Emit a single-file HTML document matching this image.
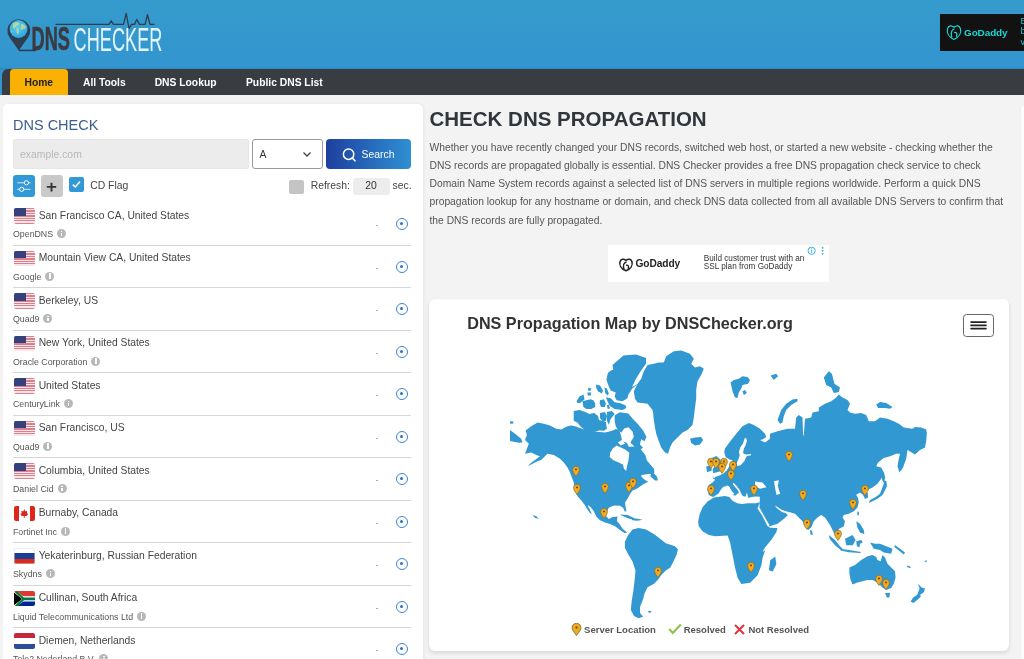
<!DOCTYPE html>
<html><head><meta charset="utf-8">
<style>
*{box-sizing:border-box;margin:0;padding:0}
html,body{width:1024px;height:659px;overflow:hidden}
body{will-change:transform;background:#f3f3f3;font-family:"Liberation Sans",sans-serif;position:relative;color:#333}
.abs{position:absolute}
#hdr{left:0;top:0;width:1024px;height:95px;background:linear-gradient(#359bcc,#3395cf 68px,#2c80b5 69px,#3395cf 70px)}
#nav{left:2px;top:69px;width:1030px;height:26px;background:#393d42;border-radius:6px 0 0 0}
#nav span{position:absolute;top:0;height:26px;line-height:28px;font-size:10.3px;font-weight:bold;color:#fff;white-space:nowrap}
#home{left:8px;width:57.6px;background:#fbb101;border-radius:4px 4px 0 0;color:#222!important;text-align:center}
#lcard{left:3px;top:104px;width:420px;height:600px;background:#fff;border-radius:5px;box-shadow:1px 0 3px rgba(0,0,0,.06)}
.t{position:absolute;white-space:nowrap;line-height:1}
#mcard{left:429px;top:299px;width:580px;height:352px;background:#fff;border-radius:6px;box-shadow:0 2px 4px rgba(0,0,0,.12)}
.row{position:absolute;left:13px;width:398px;height:43.1px;border-bottom:1.3px solid #d6d6d6}
.flag{position:absolute;left:0.7px;width:21.1px;height:15.8px;border-radius:2px;overflow:hidden}
.loc{position:absolute;left:25.7px;font-size:10.3px;color:#444;white-space:nowrap;line-height:1}
.prov{position:absolute;left:0;font-size:8.8px;color:#555;white-space:nowrap;line-height:1}
.info{display:inline-block;width:9px;height:9px;border-radius:50%;background:#bdbdbd;vertical-align:-1px;margin-left:4px;position:relative}
.info{background:#b8b8b8}.info:after{content:"";position:absolute;left:3.8px;top:3.6px;width:1.4px;height:3.6px;background:#fff}.info:before{content:"";position:absolute;left:3.8px;top:1.6px;width:1.4px;height:1.3px;background:#fff}
.dash{position:absolute;left:363px;width:2px;height:1px;background:#aaa}
.tgt{position:absolute;left:382.5px;width:12px;height:12px;border-radius:50%;border:1.3px solid #3a86dd}
.tgt:after{content:"";position:absolute;left:3.2px;top:3.2px;width:3.2px;height:3.2px;border-radius:50%;background:#2f6fc0}
.us{background:repeating-linear-gradient(#d9808c 0 1.215px,#f9e6ea 1.215px 2.43px)}
.us:before{content:"";position:absolute;left:0;top:0;width:12.3px;height:7.8px;background:#34417c}
.ca{background:linear-gradient(90deg,#e0261b 0 4.9px,#fff 4.9px 16.2px,#e0261b 16.2px)}
.ca:after{content:"";position:absolute;left:6.4px;top:3.2px;width:8.4px;height:9px;background:#d8241a;clip-path:polygon(50% 0,62% 30%,85% 20%,80% 55%,100% 50%,80% 80%,55% 80%,55% 100%,45% 100%,45% 80%,20% 80%,0 50%,20% 55%,15% 20%,38% 30%)}
.ru{background:linear-gradient(#fff 0 5.27px,#1c3f94 5.27px 10.53px,#d52b1e 10.53px)}
.ru{box-shadow:inset 0 0 0 0.5px #ddd}
.nl{background:linear-gradient(#c4283a 0 5.27px,#fff 5.27px 10.53px,#2c4c98 10.53px)}
.za{background:#fff}
</style></head>
<body>
<div id="hdr" class="abs"></div>
<svg class="abs" style="left:0;top:0" width="170" height="62" viewBox="0 0 170 62">
<defs><radialGradient id="gl" cx="0.45" cy="0.4" r="0.6"><stop offset="0" stop-color="#5fd0f5"/><stop offset="1" stop-color="#2ea6dc"/></radialGradient></defs>
<path d="M18.8 50.6 L9.6 37.5 A11.4 11.4 0 1 1 28 37.5 Z" fill="#2e3d4f"/>
<circle cx="18.6" cy="29" r="9" fill="url(#gl)"/>
<path d="M13 23.5 q3 -2 6 -1 q1 2 -1 3 q-2 0 -3 2 q-1 2 -2 0 z M16.5 28 q2 0 2.5 2 q0 3 -1.5 4.5 q-1.5 -2 -1 -6.5z M21 24 q3 0 4.5 2 q1 2 -0.5 3 q-2 -1 -3 1 q-2 -1 -1 -3z M12 30 q1 2 0 3 q-1.5 -1 0 -3z" fill="#c9d98a" opacity="0.85"/>
<path d="M18.8 50.4 H36" stroke="#2e3d4f" stroke-width="1.6"/>
<path d="M55.5 24.4 H109 L111.2 20.8 L113.5 24.4 H123.5 L126.2 13.3 L129 28.5 L131.5 24.4 H134.5 L136.8 19.5 L139.5 24.4 H145 L147.5 14.6 L150 24.4 H154.5" fill="none" stroke="#2e3d4f" stroke-width="1.3" stroke-linejoin="round"/>
<text x="0" y="0" transform="translate(31.6 50.4) scale(0.535 1)" font-family="Liberation Sans" font-weight="bold" font-size="34" fill="#3a3a40" stroke="#3a3a40" stroke-width="0.6">DNS</text>
<text x="0" y="0" transform="translate(73.6 50.7) scale(0.534 1)" font-family="Liberation Sans" font-size="34" fill="#e3f5ff">CHECKER</text>
</svg>
<div class="abs" style="left:940px;top:14.2px;width:90px;height:37px;background:#121212"></div>
<svg class="abs" style="left:945px;top:23px" width="18" height="18" viewBox="0 0 18 18"><path d="M9 16.5 C3.5 14 1.5 9.5 2.6 5.6 C3.5 2.4 6.4 2 9 4.2 C11.6 2 14.5 2.4 15.4 5.6 C16.5 9.5 14.5 14 9 16.5 Z" fill="none" stroke="#1bd8d5" stroke-width="1.2"/><path d="M6.8 14.5 C5.5 10 6.5 6.5 9.5 5.8 M9 9.5 C11.5 9 12.5 10 11.5 14" fill="none" stroke="#1bd8d5" stroke-width="1.2"/></svg>
<div class="t" style="left:964px;top:27.6px;font-size:9.9px;font-weight:bold;color:#1bd8d5;letter-spacing:-0.05px">GoDaddy</div>
<div class="t" style="left:1020.4px;top:15.5px;font-size:9px;color:#1bc8cf;line-height:10.5px;white-space:normal;width:10px">B<br>b<br>v</div>
<div id="nav" class="abs">
  <span id="home">Home</span>
  <span style="left:81px">All Tools</span>
  <span style="left:152.7px">DNS Lookup</span>
  <span style="left:244px">Public DNS List</span>
</div>
<div id="lcard" class="abs"></div>
<div class="abs" style="left:1021.3px;top:103.7px;width:20px;height:600px;background:#fbfbfb;border-radius:5px;box-shadow:0 0 3px rgba(0,0,0,.05)"></div>

<div class="t" style="left:13px;top:117.6px;font-size:14.5px;color:#3d5e90">DNS CHECK</div>
<div class="abs" style="left:13px;top:139px;width:235.5px;height:29.5px;background:#ececec;border-radius:3px;box-shadow:inset 0 0 0 1px #e6e6e6"></div>
<div class="t" style="left:20px;top:149.5px;font-size:10.4px;color:#b8b8b8">example.com</div>
<div class="abs" style="left:252.3px;top:139px;width:70.3px;height:29.5px;background:#fff;border:1px solid #9a9a9a;border-radius:3px"></div>
<div class="t" style="left:259.5px;top:149.5px;font-size:10.4px;color:#333">A</div>
<svg class="abs" style="left:302px;top:151px" width="10" height="7" viewBox="0 0 10 7"><path d="M1.5 1.5 L5 5 L8.5 1.5" fill="none" stroke="#444" stroke-width="1.3"/></svg>
<div class="abs" style="left:326px;top:139px;width:85px;height:30px;border-radius:4px;background:linear-gradient(90deg,#1d3f9e,#2a7cc8 75%,#3090d0)"></div>
<svg class="abs" style="left:342px;top:146.5px" width="15" height="16" viewBox="0 0 15 16"><circle cx="6.6" cy="7.2" r="5.2" fill="none" stroke="#fff" stroke-width="1.5"/><path d="M10.3 11 L13 13.8" stroke="#fff" stroke-width="1.6" stroke-linecap="round"/></svg>
<div class="t" style="left:361.5px;top:149.5px;font-size:10.4px;color:#fff">Search</div>
<div class="abs" style="left:13.3px;top:175px;width:21.6px;height:21.6px;background:#3399d6;border-radius:3px"></div>
<svg class="abs" style="left:13.3px;top:175px" width="22" height="22" viewBox="0 0 22 22"><path d="M4.3 7.8 H17.5 M4.3 14.3 H17.5" stroke="#e8f6ff" stroke-width="0.9"/><circle cx="13.4" cy="7.8" r="2.1" fill="#2f8fd0" stroke="#fff" stroke-width="1"/><circle cx="8.7" cy="14.3" r="2.1" fill="#2f9ad6" stroke="#fff" stroke-width="1"/></svg>
<div class="abs" style="left:41.4px;top:175px;width:21.4px;height:21.6px;background:#c9c9c9;border-radius:3px"></div>
<svg class="abs" style="left:41.4px;top:175px" width="22" height="22" viewBox="0 0 22 22"><path d="M10.5 7.8 V16.6 M5.8 11.9 H15.2" stroke="#333" stroke-width="1.9"/></svg>
<div class="abs" style="left:69px;top:177.2px;width:14.8px;height:14.6px;background:#3399d6;border-radius:2px"></div>
<svg class="abs" style="left:69px;top:177.2px" width="15" height="15" viewBox="0 0 15 15"><path d="M3.8 7.6 L6.3 10 L11 4.6" fill="none" stroke="#fff" stroke-width="1.5"/></svg>
<div class="t" style="left:90.2px;top:180.5px;font-size:10.4px;color:#444">CD Flag</div>
<div class="abs" style="left:289.2px;top:179.7px;width:14.4px;height:14px;background:#c4c4c4;border-radius:2px"></div>
<div class="t" style="left:310.7px;top:181px;font-size:10.4px;color:#444">Refresh:</div>
<div class="abs" style="left:352.5px;top:177.5px;width:37.3px;height:17.2px;background:#ededed;border-radius:3px"></div>
<div class="t" style="left:365.2px;top:181px;font-size:10.4px;color:#333">20</div>
<div class="t" style="left:392.6px;top:181px;font-size:10.4px;color:#444">sec.</div>
<div class="row" style="top:202.8px"><div class="flag us" style="top:5.4px"></div><div class="loc" style="top:8.2px">San Francisco CA, United States</div><div class="prov" style="top:26.5px">OpenDNS<i class="info"></i></div><div class="dash" style="top:22.5px"></div><div class="tgt" style="top:15.3px"></div></div>
<div class="row" style="top:245.3px"><div class="flag us" style="top:5.4px"></div><div class="loc" style="top:8.2px">Mountain View CA, United States</div><div class="prov" style="top:26.5px">Google<i class="info"></i></div><div class="dash" style="top:22.5px"></div><div class="tgt" style="top:15.3px"></div></div>
<div class="row" style="top:287.8px"><div class="flag us" style="top:5.4px"></div><div class="loc" style="top:8.2px">Berkeley, US</div><div class="prov" style="top:26.5px">Quad9<i class="info"></i></div><div class="dash" style="top:22.5px"></div><div class="tgt" style="top:15.3px"></div></div>
<div class="row" style="top:330.3px"><div class="flag us" style="top:5.4px"></div><div class="loc" style="top:8.2px">New York, United States</div><div class="prov" style="top:26.5px">Oracle Corporation<i class="info"></i></div><div class="dash" style="top:22.5px"></div><div class="tgt" style="top:15.3px"></div></div>
<div class="row" style="top:372.8px"><div class="flag us" style="top:5.4px"></div><div class="loc" style="top:8.2px">United States</div><div class="prov" style="top:26.5px">CenturyLink<i class="info"></i></div><div class="dash" style="top:22.5px"></div><div class="tgt" style="top:15.3px"></div></div>
<div class="row" style="top:415.3px"><div class="flag us" style="top:5.4px"></div><div class="loc" style="top:8.2px">San Francisco, US</div><div class="prov" style="top:26.5px">Quad9<i class="info"></i></div><div class="dash" style="top:22.5px"></div><div class="tgt" style="top:15.3px"></div></div>
<div class="row" style="top:457.8px"><div class="flag us" style="top:5.4px"></div><div class="loc" style="top:8.2px">Columbia, United States</div><div class="prov" style="top:26.5px">Daniel Cid<i class="info"></i></div><div class="dash" style="top:22.5px"></div><div class="tgt" style="top:15.3px"></div></div>
<div class="row" style="top:500.3px"><div class="flag ca" style="top:5.4px"></div><div class="loc" style="top:8.2px">Burnaby, Canada</div><div class="prov" style="top:26.5px">Fortinet Inc<i class="info"></i></div><div class="dash" style="top:22.5px"></div><div class="tgt" style="top:15.3px"></div></div>
<div class="row" style="top:542.8px"><div class="flag ru" style="top:5.4px"></div><div class="loc" style="top:8.2px">Yekaterinburg, Russian Federation</div><div class="prov" style="top:26.5px">Skydns<i class="info"></i></div><div class="dash" style="top:22.5px"></div><div class="tgt" style="top:15.3px"></div></div>
<div class="row" style="top:585.3px"><div class="flag za" style="top:5.4px"><svg width="21.1" height="15.8" viewBox="0 0 22 16" preserveAspectRatio="none" style="display:block"><rect width="22" height="16" fill="#fff"/><path d="M0 0 H22 V5.3 H9 Z" fill="#de3831"/><path d="M0 16 H22 V10.7 H9 Z" fill="#002395"/><path d="M0 1.5 L8.5 8 L0 14.5 Z" fill="#000"/><path d="M0 0 L0 1.5 L8.5 8 L0 14.5 L0 16 L10 9.3 H22 V6.7 H10 Z" fill="none"/><path d="M0 0.5 L9.2 8 L0 15.5" fill="none" stroke="#ffb612" stroke-width="1"/><path d="M1 0 L10.3 6.5 H22 V9.5 H10.3 L1 16" fill="none" stroke="#fff" stroke-width="1.2"/><path d="M10.2 8 H22" stroke="#007a4d" stroke-width="2.6"/><path d="M0.8 -0.5 L10.2 8 L0.8 16.5" fill="none" stroke="#007a4d" stroke-width="2.2"/><path d="M0 2.2 L7.3 8 L0 13.8 Z" fill="#000"/></svg></div><div class="loc" style="top:8.2px">Cullinan, South Africa</div><div class="prov" style="top:26.5px">Liquid Telecommunications Ltd<i class="info"></i></div><div class="dash" style="top:22.5px"></div><div class="tgt" style="top:15.3px"></div></div>
<div class="row" style="top:627.8px"><div class="flag nl" style="top:5.4px"></div><div class="loc" style="top:8.2px">Diemen, Netherlands</div><div class="prov" style="top:26.5px">Tele2 Nederland B.V.<i class="info"></i></div><div class="dash" style="top:22.5px"></div><div class="tgt" style="top:15.3px"></div></div>
<div class="t" style="left:429.5px;top:108.5px;font-size:20.5px;font-weight:bold;color:#30363c">CHECK DNS PROPAGATION</div>
<div class="abs" style="left:429.5px;top:138.5px;width:590px;font-size:10.3px;line-height:18.3px;color:#555">
<div style="white-space:nowrap">Whether you have recently changed your DNS records, switched web host, or started a new website - checking whether the</div>
<div style="white-space:nowrap">DNS records are propagated globally is essential. DNS Checker provides a free DNS propagation check service to check</div>
<div style="white-space:nowrap">Domain Name System records against a selected list of DNS servers in multiple regions worldwide. Perform a quick DNS</div>
<div style="white-space:nowrap">propagation lookup for any hostname or domain, and check DNS data collected from all available DNS Servers to confirm that</div>
<div style="white-space:nowrap">the DNS records are fully propagated.</div>
</div>
<div class="abs" style="left:608px;top:245px;width:220.5px;height:36.5px;background:#fff"></div>
<svg class="abs" style="left:618px;top:256.5px" width="16" height="15" viewBox="0 0 16 15"><path d="M8 13.8 C3 11.8 1.2 8 2 4.8 C2.8 1.8 5.6 1.4 8 3.4 C10.4 1.4 13.2 1.8 14 4.8 C14.8 8 13 11.8 8 13.8 Z" fill="none" stroke="#222" stroke-width="1.5"/><path d="M6 12 C4.8 8.5 5.6 5.5 8.5 5 M8 8.2 C10.3 7.8 11 9 10.2 12" fill="none" stroke="#222" stroke-width="1.4"/></svg>
<div class="t" style="left:635.5px;top:259.3px;font-size:10.2px;font-weight:bold;color:#222;letter-spacing:-0.1px">GoDaddy</div>
<div class="t" style="left:703.8px;top:254.5px;font-size:8.2px;line-height:8.8px;color:#333">Build customer trust with an<br>SSL plan from GoDaddy</div>
<svg class="abs" style="left:805px;top:244.5px" width="22" height="12" viewBox="0 0 22 12"><circle cx="6.6" cy="5.8" r="3.6" fill="none" stroke="#25a9d9" stroke-width="0.9"/><path d="M6.6 4.6 V7.8 M6.6 3.3 V3.9" stroke="#25a9d9" stroke-width="0.9"/><circle cx="17.6" cy="2.8" r="0.9" fill="#25a9d9"/><circle cx="17.6" cy="5.8" r="0.9" fill="#25a9d9"/><circle cx="17.6" cy="8.8" r="0.9" fill="#25a9d9"/></svg>
<div id="mcard" class="abs"></div>
<div class="t" style="left:467.2px;top:315.3px;font-size:16.2px;font-weight:bold;color:#333">DNS Propagation Map by DNSChecker.org</div>
<div class="abs" style="left:963.2px;top:314.2px;width:30.4px;height:23.3px;border:1.2px solid #666;border-radius:3.5px;background:#fff"></div>
<svg class="abs" style="left:963.2px;top:314.2px" width="31" height="24" viewBox="0 0 31 24"><path d="M8 8.1 H23 M8 11.4 H23 M8 14.6 H23" stroke="#222" stroke-width="1.6" stroke-linecap="round"/></svg>
<div id="map"><svg class="abs" style="left:0;top:0" width="1024" height="659" viewBox="0 0 1024 659"><path d="M525.6 430.6 L531.2 426.2 L537.5 422.5 L543.8 423.8 L550.0 425.6 L556.2 428.8 L561.2 429.4 L567.5 426.2 L571.2 425.6 L575.0 426.2 L580.0 428.1 L590.0 431.6 L597.4 431.8 L604.9 432.4 L611.3 431.0 L616.0 428.9 L619.2 430.0 L620.8 434.8 L621.9 440.1 L626.7 442.4 L628.8 446.7 L634.6 446.4 L641.0 449.6 L645.3 454.9 L646.9 460.5 L651.0 465.3 L654.1 469.0 L654.4 472.8 L651.7 473.8 L648.3 474.1 L643.5 474.8 L640.8 475.5 L642.8 478.2 L645.5 480.3 L648.3 481.7 L645.5 483.0 L642.1 485.1 L637.3 488.5 L632.6 490.5 L630.5 493.3 L627.5 498.8 L627.5 498.8 L625.0 502.5 L625.6 506.9 L626.5 511.2 L624.8 511.5 L623.1 507.8 L620.0 505.8 L613.8 505.6 L608.8 507.8 L606.5 512.5 L606.2 516.2 L608.8 519.0 L612.5 517.0 L617.5 516.5 L616.9 521.2 L619.4 523.8 L622.5 528.8 L626.5 531.9 L628.1 530.6 L626.2 533.1 L624.4 533.1 L620.0 530.0 L615.0 526.2 L610.0 524.0 L605.0 522.5 L600.0 520.2 L596.2 516.5 L593.8 511.2 L590.6 506.9 L587.5 505.0 L591.9 514.0 L590.0 513.1 L586.9 508.8 L584.4 504.4 L581.2 500.2 L577.5 496.2 L575.0 491.2 L573.8 486.2 L574.4 480.0 L575.0 492.0 L573.8 482.5 L571.9 477.5 L570.0 472.5 L567.5 467.5 L563.8 462.5 L560.0 458.8 L553.8 455.0 L547.5 453.8 L541.2 460.0 L537.5 461.2 L532.5 463.8 L528.1 466.2 L530.0 463.8 L535.0 460.0 L540.0 456.2 L536.2 455.0 L531.2 452.5 L525.0 453.8 L526.9 448.8 L528.8 443.8 L525.0 440.0 L526.9 435.0Z M510.0 430.0 L515.0 433.8 L521.2 438.8 L522.5 442.5 L518.8 442.8 L510.0 441.0Z M510.0 421.2 L513.1 421.5 L513.5 423.5 L510.2 423.8Z M651.0 474.1 L653.7 473.1 L657.2 476.9 L657.8 480.4 L655.1 480.4 L652.4 478.2 L650.3 476.2Z M620.0 514.4 L627.5 515.0 L632.5 517.2 L635.2 518.8 L630.0 519.0 L623.8 516.5Z M631.2 519.0 L636.2 518.5 L642.5 519.8 L637.5 520.8 L632.5 520.2Z M633.8 391.2 L637.5 383.8 L641.2 378.8 L643.8 371.2 L647.5 365.0 L653.8 363.8 L658.8 362.5 L663.8 362.5 L666.2 356.2 L673.8 351.2 L681.2 350.6 L690.0 353.8 L693.8 358.8 L691.2 363.8 L695.0 367.5 L700.0 366.2 L703.8 368.8 L701.2 375.0 L697.5 381.2 L696.2 390.0 L696.2 398.8 L695.0 407.5 L693.8 417.5 L692.5 425.0 L687.5 430.0 L682.5 432.5 L677.5 437.5 L672.5 442.5 L670.0 447.5 L668.1 453.8 L665.0 452.5 L661.2 447.5 L658.8 441.2 L656.2 433.8 L655.0 427.5 L653.8 420.0 L653.1 412.5 L655.0 422.0 L652.5 410.0 L647.5 403.8 L637.5 402.5 L635.0 398.8Z M690.0 438.8 L695.0 437.5 L701.2 436.9 L703.1 440.0 L700.0 444.4 L695.0 445.6 L691.2 443.1Z M612.5 365.0 L623.4 355.6 L635.9 354.4 L646.1 358.0 L646.1 363.4 L640.6 371.2 L635.9 379.1 L632.0 386.9 L638.1 383.7 L632.3 388.6 L628.4 394.4 L627.4 398.3 L622.5 401.2 L616.6 400.3 L614.7 396.4 L615.7 392.5 L610.8 390.5 L608.8 386.6 L606.4 379.8 L607.9 372.9 L610.9 370.5 L613.3 369.7Z M605.9 397.3 L610.8 398.3 L614.7 402.2 L620.5 403.2 L625.4 405.2 L626.4 408.1 L622.5 410.0 L614.7 409.1 L609.8 406.1 L607.9 402.2Z M600.0 400.3 L603.9 399.3 L605.9 403.2 L604.9 407.1 L601.0 407.1 L599.6 403.2Z M606.9 405.2 L608.8 404.7 L610.0 408.6 L607.7 409.1Z M596.1 384.6 L600.0 385.6 L603.0 390.5 L602.0 393.4 L598.1 391.5 L596.1 387.6Z M604.4 387.6 L606.9 388.6 L608.8 393.4 L607.9 395.4 L605.4 393.4Z M588.3 387.6 L591.2 388.6 L590.3 391.0 L588.1 390.5Z M587.3 392.5 L591.2 392.5 L590.8 395.4 L587.8 395.4Z M576.6 401.2 L579.5 396.4 L583.4 394.4 L584.4 398.3 L580.5 402.2 L577.6 403.2Z M582.5 401.2 L586.4 400.3 L590.3 399.3 L593.2 400.3 L595.2 403.2 L595.2 407.1 L591.2 409.1 L586.4 409.1 L583.4 407.1Z M573.7 411.0 L579.5 410.0 L585.4 412.0 L589.3 413.9 L594.2 413.0 L598.1 415.9 L599.1 420.8 L601.0 426.6 L599.1 430.5 L592.2 432.5 L585.4 430.5 L580.5 426.6 L577.6 422.7 L573.7 420.8Z M574.6 421.0 L585.4 420.0 L599.1 420.0 L605.9 422.0 L606.9 428.8 L603.9 430.7 L599.1 430.3 L593.2 430.9 L589.3 430.7 L584.4 426.8 L579.5 423.9Z M600.0 413.0 L604.9 412.0 L606.9 415.9 L605.9 420.8 L603.0 421.8 L600.0 417.9Z M606.9 412.0 L611.8 411.0 L614.7 413.9 L610.8 418.8 L608.8 424.7 L606.9 420.8Z M576.6 400.9 L579.7 396.2 L583.6 394.7 L584.4 399.4 L579.7 403.3Z M624.9 541.7 L627.9 535.6 L632.5 529.5 L638.5 528.0 L646.1 529.5 L653.7 534.1 L659.8 538.6 L665.8 543.2 L674.9 546.2 L678.0 549.3 L676.4 555.3 L673.4 561.4 L670.4 567.5 L665.8 570.5 L661.3 575.0 L658.2 579.6 L653.7 584.1 L647.6 587.2 L644.6 593.2 L643.1 599.3 L640.0 606.9 L640.0 613.0 L643.1 616.8 L638.5 618.3 L634.0 616.0 L630.9 609.9 L631.7 600.8 L633.2 591.7 L634.7 579.6 L635.5 570.5 L632.5 561.4 L627.9 553.8 L624.9 547.7Z M647.6 611.4 L649.9 610.7 L651.7 611.7 L649.4 613.0Z M708.8 495.0 L707.5 490.0 L708.8 485.0 L712.5 482.5 L715.0 480.0 L712.5 476.2 L711.2 472.5 L713.3 479.1 L715.6 476.7 L719.5 475.5 L723.4 473.6 L726.6 470.5 L728.9 467.0 L730.1 463.4 L732.8 460.5 L729.7 459.5 L725.8 457.3 L724.2 452.5 L725.0 448.6 L727.7 444.7 L731.2 440.0 L736.2 433.8 L742.5 426.2 L748.8 423.1 L753.8 425.0 L760.0 428.8 L765.0 433.8 L766.2 436.9 L762.5 439.4 L760.0 440.0 L765.0 442.5 L770.0 438.8 L770.0 433.8 L777.5 431.2 L787.5 428.8 L795.0 428.8 L796.2 417.5 L798.8 415.0 L802.5 417.5 L803.1 435.0 L804.4 436.2 L803.8 435.0 L805.0 418.8 L811.2 417.5 L812.5 412.5 L818.8 411.2 L818.8 407.5 L825.0 403.8 L831.2 401.2 L836.2 397.5 L838.8 394.4 L842.5 397.5 L847.5 400.0 L850.0 403.8 L847.5 410.0 L850.0 412.5 L855.0 413.8 L861.2 413.1 L866.2 415.0 L868.8 421.2 L875.0 421.2 L880.0 417.5 L887.5 418.8 L893.8 421.2 L898.8 423.8 L903.8 427.5 L912.5 428.8 L915.0 426.9 L921.2 427.5 L926.2 429.4 L925.0 426.2 L926.9 432.5 L926.2 441.2 L925.0 447.5 L920.0 450.0 L915.0 454.4 L907.5 450.0 L906.2 458.8 L903.1 467.5 L899.4 472.5 L897.5 466.2 L898.8 458.8 L900.0 453.8 L896.2 453.8 L890.0 456.2 L883.8 458.1 L878.1 462.5 L876.2 466.2 L881.2 467.5 L883.1 472.5 L881.2 478.8 L877.5 483.8 L872.5 487.5 L867.5 490.0 L863.8 490.2 L867.8 493.1 L868.1 497.5 L865.0 499.0 L863.1 495.0 L860.0 492.5 L856.2 494.8 L858.1 498.1 L858.8 502.5 L857.5 507.0 L857.5 507.5 L853.8 511.2 L848.8 513.8 L843.8 515.0 L842.5 517.5 L845.0 521.2 L843.8 526.2 L838.8 529.0 L837.5 538.8 L835.0 535.0 L832.5 530.0 L830.0 525.0 L827.5 521.2 L825.0 517.5 L821.2 515.0 L817.5 517.5 L813.8 521.2 L811.2 527.5 L808.1 530.0 L805.0 526.2 L802.5 521.2 L797.5 516.2 L795.0 513.8 L790.0 512.2 L785.0 511.0 L781.2 509.4 L777.5 506.9 L775.0 505.6 L776.2 507.5 L779.8 510.6 L782.5 512.2 L785.6 513.1 L787.8 515.2 L782.5 520.0 L777.5 523.8 L769.0 526.5 L769.4 525.0 L764.4 516.5 L759.4 507.5 L759.8 500.6 L759.8 496.8 L755.9 496.4 L751.2 496.9 L749.7 497.7 L748.1 497.5 L747.0 492.5 L745.4 496.8 L742.8 496.1 L741.1 493.2 L739.5 489.7 L736.0 485.2 L733.4 482.8 L732.7 484.1 L738.0 490.5 L739.1 493.2 L737.6 493.6 L735.8 495.3 L734.1 493.6 L731.9 491.3 L729.4 486.8 L727.8 485.5 L723.1 487.0 L720.9 489.6 L718.6 493.6 L713.1 496.9 L710.6 496.1 L708.3 494.4Z M711.7 458.0 L716.4 456.0 L720.3 459.5 L722.3 465.8 L720.3 471.2 L713.3 473.2 L712.5 469.7 L714.8 465.8Z M706.2 466.6 L710.9 465.4 L711.9 470.5 L707.0 472.2Z M730.6 382.5 L733.8 380.0 L738.8 378.8 L742.5 376.2 L747.5 376.9 L750.0 380.0 L748.1 383.8 L742.5 385.0 L741.2 388.8 L738.8 392.5 L737.5 398.1 L735.0 397.5 L732.5 391.2Z M742.5 391.2 L745.0 390.0 L746.9 393.1 L743.8 395.0Z M770.6 375.6 L776.2 373.8 L778.1 376.2 L773.8 380.0Z M777.5 420.0 L781.2 410.0 L786.2 403.8 L792.5 399.4 L797.5 398.8 L797.5 401.2 L791.2 405.0 L786.2 410.0 L783.8 416.2 L782.5 422.5 L780.0 423.8Z M823.8 377.5 L828.8 371.2 L831.9 373.8 L834.4 383.8 L840.0 387.5 L838.8 391.9 L833.8 393.1 L831.2 387.5 L826.2 385.0Z M876.2 404.4 L880.0 401.9 L886.2 403.1 L892.5 406.9 L890.0 408.8 L885.0 408.1 L878.1 408.1Z M881.2 467.5 L884.0 472.5 L885.2 477.5 L883.8 482.8 L882.2 480.0 L881.0 475.0Z M883.8 480.0 L886.5 481.2 L886.9 486.2 L885.0 490.2 L882.5 495.0 L877.5 498.8 L872.5 501.2 L868.8 503.1 L870.0 500.0 L875.0 497.5 L880.0 493.8 L881.9 488.8 L883.8 483.8Z M857.5 511.2 L859.0 511.9 L858.8 515.6 L857.2 515.0Z M810.0 530.0 L811.9 530.6 L812.8 534.4 L810.6 535.0Z M828.8 535.0 L835.0 540.0 L840.0 546.2 L844.0 550.2 L841.2 550.2 L835.0 545.2 L829.8 539.0Z M840.0 548.8 L848.8 550.0 L861.2 551.9 L860.0 553.1 L848.8 552.2 L840.6 550.6Z M845.0 538.8 L852.5 535.0 L855.6 540.0 L852.8 545.2 L846.2 545.2Z M856.2 541.2 L861.2 540.0 L862.8 542.5 L860.0 543.8 L859.4 547.5 L856.9 546.2Z M856.2 521.2 L860.0 523.8 L863.8 530.0 L864.4 534.0 L860.2 532.8 L857.5 527.8Z M870.0 542.5 L875.0 543.8 L880.0 543.8 L886.2 546.2 L892.5 548.8 L891.2 553.8 L883.8 552.5 L880.0 550.0 L873.8 548.8Z M895.0 545.0 L905.0 552.5 L903.8 554.4 L894.4 546.9Z M907.5 565.6 L911.2 566.9 L910.0 568.1 L906.9 566.9Z M924.4 561.2 L926.9 560.0 L926.2 562.5Z M698.1 521.8 L699.7 513.9 L702.8 506.9 L707.5 501.4 L713.8 497.5 L724.7 496.1 L729.4 496.9 L732.5 500.7 L737.2 503.2 L741.9 503.9 L748.1 503.2 L755.9 503.2 L759.8 502.2 L757.5 508.5 L762.2 515.5 L766.9 524.9 L766.9 525.6 L770.0 527.8 L777.5 528.1 L776.2 532.5 L771.2 540.0 L765.0 547.5 L762.5 552.0 L765.2 550.2 L762.6 557.7 L761.4 565.2 L757.6 575.2 L750.1 582.7 L741.4 584.0 L737.6 577.7 L735.1 567.7 L732.6 555.2 L730.1 542.6 L727.6 535.6 L715.0 536.2 L708.8 535.0 L702.5 531.2 L698.8 526.2Z M733.3 494.0 L736.0 493.6 L735.6 495.6 L733.7 495.6Z M770.2 560.2 L775.2 556.4 L776.4 563.9 L772.7 571.5 L768.9 570.2Z M849.4 567.5 L855.0 565.0 L861.2 560.0 L867.5 556.2 L872.5 555.0 L876.2 556.9 L877.5 560.0 L880.6 561.2 L882.5 555.0 L885.0 557.5 L887.5 563.8 L891.2 567.5 L895.0 571.2 L895.6 577.5 L893.8 583.8 L891.2 588.1 L886.2 590.0 L882.5 587.5 L880.0 585.0 L877.5 582.5 L872.5 580.0 L867.5 580.0 L862.5 581.2 L857.5 582.5 L852.5 584.4 L850.6 580.0 L849.4 573.8Z M885.0 593.1 L890.0 593.1 L889.4 597.5 L886.9 597.5Z M917.8 583.7 L921.7 587.5 L925.0 588.5 L923.8 592.3 L920.2 594.8 L920.8 596.8 L916.3 600.8 L913.3 603.1 L910.6 601.4 L913.0 597.8 L917.2 594.8 L919.0 590.0 L919.6 588.2Z M532.6 515.1 L536.3 516.3 L538.8 518.8 L535.1 518.1Z" fill="#3298d2"/><path d="M755.0 481.5 L762.5 482.5 L766.5 487.2 L760.0 488.8 L755.2 486.2Z M774.0 481.2 L778.8 480.2 L777.8 486.2 L780.2 493.8 L776.5 495.0 L775.2 488.8Z M746.1 438.0 L747.0 440.8 L745.5 445.5 L743.9 448.6 L743.1 452.5 L743.9 454.1 L746.9 454.5 L750.8 453.9 L751.2 455.3 L746.9 456.1 L745.3 458.8 L744.5 461.1 L742.2 463.4 L740.6 465.2 L737.3 465.9 L736.6 463.4 L738.3 459.5 L739.7 455.6 L738.9 451.7 L740.5 447.0 L743.0 443.5 L744.5 438.4Z M609.7 457.1 L610.2 452.8 L612.8 448.6 L616.6 445.4 L619.8 447.0 L625.1 449.6 L629.3 452.8 L628.5 460.3 L627.2 465.6 L626.1 471.1 L624.0 468.8 L622.9 464.5 L618.7 462.4 L613.4 460.3Z M621.9 441.1 L622.9 435.8 L624.2 428.6 L628.5 427.3 L632.7 431.8 L633.8 437.1 L630.6 441.3 L626.1 442.4Z M617.8 442.4 L621.9 440.1 L625.1 443.5 L620.8 445.6Z" fill="#fff"/><path d="M614.7 415.6 L619.8 412.2 L628.3 413.5 L632.7 418.8 L638.0 424.3 L643.1 430.5 L646.5 436.9 L644.4 441.3 L641.2 439.2 L639.9 444.5 L643.1 447.7 L639.9 449.8 L634.6 446.7 L630.4 442.4 L633.8 437.1 L632.7 431.8 L628.5 427.3 L624.2 428.4 L621.3 432.8 L617.8 429.7 L615.7 426.3 L614.7 420.9Z" fill="#3298d2"/></svg><svg class="abs" style="left:572.3px;top:464.8px" width="8" height="12" viewBox="0 0 8 12"><path d="M4 11.4 C1.6 8.2 0.6 6.6 0.6 4.6 A3.4 3.4 0 0 1 7.4 4.6 C7.4 6.6 6.4 8.2 4 11.4 Z" fill="#f5a91d" stroke="#7d6d33" stroke-width="0.7"/><circle cx="4" cy="4.4" r="0.9" fill="#4a3d18"/></svg>
<svg class="abs" style="left:572.6px;top:482.7px" width="8" height="12" viewBox="0 0 8 12"><path d="M4 11.4 C1.6 8.2 0.6 6.6 0.6 4.6 A3.4 3.4 0 0 1 7.4 4.6 C7.4 6.6 6.4 8.2 4 11.4 Z" fill="#f5a91d" stroke="#7d6d33" stroke-width="0.7"/><circle cx="4" cy="4.4" r="0.9" fill="#4a3d18"/></svg>
<svg class="abs" style="left:601.0px;top:482.4px" width="8" height="12" viewBox="0 0 8 12"><path d="M4 11.4 C1.6 8.2 0.6 6.6 0.6 4.6 A3.4 3.4 0 0 1 7.4 4.6 C7.4 6.6 6.4 8.2 4 11.4 Z" fill="#f5a91d" stroke="#7d6d33" stroke-width="0.7"/><circle cx="4" cy="4.4" r="0.9" fill="#4a3d18"/></svg>
<svg class="abs" style="left:625.4px;top:481.0px" width="8" height="12" viewBox="0 0 8 12"><path d="M4 11.4 C1.6 8.2 0.6 6.6 0.6 4.6 A3.4 3.4 0 0 1 7.4 4.6 C7.4 6.6 6.4 8.2 4 11.4 Z" fill="#f5a91d" stroke="#7d6d33" stroke-width="0.7"/><circle cx="4" cy="4.4" r="0.9" fill="#4a3d18"/></svg>
<svg class="abs" style="left:629.2px;top:476.9px" width="8" height="12" viewBox="0 0 8 12"><path d="M4 11.4 C1.6 8.2 0.6 6.6 0.6 4.6 A3.4 3.4 0 0 1 7.4 4.6 C7.4 6.6 6.4 8.2 4 11.4 Z" fill="#f5a91d" stroke="#7d6d33" stroke-width="0.7"/><circle cx="4" cy="4.4" r="0.9" fill="#4a3d18"/></svg>
<svg class="abs" style="left:599.9px;top:507.3px" width="8" height="12" viewBox="0 0 8 12"><path d="M4 11.4 C1.6 8.2 0.6 6.6 0.6 4.6 A3.4 3.4 0 0 1 7.4 4.6 C7.4 6.6 6.4 8.2 4 11.4 Z" fill="#f5a91d" stroke="#7d6d33" stroke-width="0.7"/><circle cx="4" cy="4.4" r="0.9" fill="#4a3d18"/></svg>
<svg class="abs" style="left:706.6px;top:456.7px" width="8" height="12" viewBox="0 0 8 12"><path d="M4 11.4 C1.6 8.2 0.6 6.6 0.6 4.6 A3.4 3.4 0 0 1 7.4 4.6 C7.4 6.6 6.4 8.2 4 11.4 Z" fill="#f5a91d" stroke="#7d6d33" stroke-width="0.7"/><circle cx="4" cy="4.4" r="0.9" fill="#4a3d18"/></svg>
<svg class="abs" style="left:711.6px;top:456.7px" width="8" height="12" viewBox="0 0 8 12"><path d="M4 11.4 C1.6 8.2 0.6 6.6 0.6 4.6 A3.4 3.4 0 0 1 7.4 4.6 C7.4 6.6 6.4 8.2 4 11.4 Z" fill="#f5a91d" stroke="#7d6d33" stroke-width="0.7"/><circle cx="4" cy="4.4" r="0.9" fill="#4a3d18"/></svg>
<svg class="abs" style="left:719.8px;top:457.3px" width="8" height="12" viewBox="0 0 8 12"><path d="M4 11.4 C1.6 8.2 0.6 6.6 0.6 4.6 A3.4 3.4 0 0 1 7.4 4.6 C7.4 6.6 6.4 8.2 4 11.4 Z" fill="#f5a91d" stroke="#7d6d33" stroke-width="0.7"/><circle cx="4" cy="4.4" r="0.9" fill="#4a3d18"/></svg>
<svg class="abs" style="left:717.9px;top:462.3px" width="8" height="12" viewBox="0 0 8 12"><path d="M4 11.4 C1.6 8.2 0.6 6.6 0.6 4.6 A3.4 3.4 0 0 1 7.4 4.6 C7.4 6.6 6.4 8.2 4 11.4 Z" fill="#f5a91d" stroke="#7d6d33" stroke-width="0.7"/><circle cx="4" cy="4.4" r="0.9" fill="#4a3d18"/></svg>
<svg class="abs" style="left:728.5px;top:460.4px" width="8" height="12" viewBox="0 0 8 12"><path d="M4 11.4 C1.6 8.2 0.6 6.6 0.6 4.6 A3.4 3.4 0 0 1 7.4 4.6 C7.4 6.6 6.4 8.2 4 11.4 Z" fill="#f5a91d" stroke="#7d6d33" stroke-width="0.7"/><circle cx="4" cy="4.4" r="0.9" fill="#4a3d18"/></svg>
<svg class="abs" style="left:727.2px;top:469.0px" width="8" height="12" viewBox="0 0 8 12"><path d="M4 11.4 C1.6 8.2 0.6 6.6 0.6 4.6 A3.4 3.4 0 0 1 7.4 4.6 C7.4 6.6 6.4 8.2 4 11.4 Z" fill="#f5a91d" stroke="#7d6d33" stroke-width="0.7"/><circle cx="4" cy="4.4" r="0.9" fill="#4a3d18"/></svg>
<svg class="abs" style="left:707.1px;top:483.6px" width="8" height="12" viewBox="0 0 8 12"><path d="M4 11.4 C1.6 8.2 0.6 6.6 0.6 4.6 A3.4 3.4 0 0 1 7.4 4.6 C7.4 6.6 6.4 8.2 4 11.4 Z" fill="#f5a91d" stroke="#7d6d33" stroke-width="0.7"/><circle cx="4" cy="4.4" r="0.9" fill="#4a3d18"/></svg>
<svg class="abs" style="left:749.8px;top:483.6px" width="8" height="12" viewBox="0 0 8 12"><path d="M4 11.4 C1.6 8.2 0.6 6.6 0.6 4.6 A3.4 3.4 0 0 1 7.4 4.6 C7.4 6.6 6.4 8.2 4 11.4 Z" fill="#f5a91d" stroke="#7d6d33" stroke-width="0.7"/><circle cx="4" cy="4.4" r="0.9" fill="#4a3d18"/></svg>
<svg class="abs" style="left:784.8px;top:449.8px" width="8" height="12" viewBox="0 0 8 12"><path d="M4 11.4 C1.6 8.2 0.6 6.6 0.6 4.6 A3.4 3.4 0 0 1 7.4 4.6 C7.4 6.6 6.4 8.2 4 11.4 Z" fill="#f5a91d" stroke="#7d6d33" stroke-width="0.7"/><circle cx="4" cy="4.4" r="0.9" fill="#4a3d18"/></svg>
<svg class="abs" style="left:798.5px;top:488.5px" width="8" height="12" viewBox="0 0 8 12"><path d="M4 11.4 C1.6 8.2 0.6 6.6 0.6 4.6 A3.4 3.4 0 0 1 7.4 4.6 C7.4 6.6 6.4 8.2 4 11.4 Z" fill="#f5a91d" stroke="#7d6d33" stroke-width="0.7"/><circle cx="4" cy="4.4" r="0.9" fill="#4a3d18"/></svg>
<svg class="abs" style="left:803.2px;top:517.6px" width="8" height="12" viewBox="0 0 8 12"><path d="M4 11.4 C1.6 8.2 0.6 6.6 0.6 4.6 A3.4 3.4 0 0 1 7.4 4.6 C7.4 6.6 6.4 8.2 4 11.4 Z" fill="#f5a91d" stroke="#7d6d33" stroke-width="0.7"/><circle cx="4" cy="4.4" r="0.9" fill="#4a3d18"/></svg>
<svg class="abs" style="left:834.1px;top:528.5px" width="8" height="12" viewBox="0 0 8 12"><path d="M4 11.4 C1.6 8.2 0.6 6.6 0.6 4.6 A3.4 3.4 0 0 1 7.4 4.6 C7.4 6.6 6.4 8.2 4 11.4 Z" fill="#f5a91d" stroke="#7d6d33" stroke-width="0.7"/><circle cx="4" cy="4.4" r="0.9" fill="#4a3d18"/></svg>
<svg class="abs" style="left:848.5px;top:497.6px" width="8" height="12" viewBox="0 0 8 12"><path d="M4 11.4 C1.6 8.2 0.6 6.6 0.6 4.6 A3.4 3.4 0 0 1 7.4 4.6 C7.4 6.6 6.4 8.2 4 11.4 Z" fill="#f5a91d" stroke="#7d6d33" stroke-width="0.7"/><circle cx="4" cy="4.4" r="0.9" fill="#4a3d18"/></svg>
<svg class="abs" style="left:861.0px;top:483.5px" width="8" height="12" viewBox="0 0 8 12"><path d="M4 11.4 C1.6 8.2 0.6 6.6 0.6 4.6 A3.4 3.4 0 0 1 7.4 4.6 C7.4 6.6 6.4 8.2 4 11.4 Z" fill="#f5a91d" stroke="#7d6d33" stroke-width="0.7"/><circle cx="4" cy="4.4" r="0.9" fill="#4a3d18"/></svg>
<svg class="abs" style="left:653.5px;top:565.9px" width="8" height="12" viewBox="0 0 8 12"><path d="M4 11.4 C1.6 8.2 0.6 6.6 0.6 4.6 A3.4 3.4 0 0 1 7.4 4.6 C7.4 6.6 6.4 8.2 4 11.4 Z" fill="#f5a91d" stroke="#7d6d33" stroke-width="0.7"/><circle cx="4" cy="4.4" r="0.9" fill="#4a3d18"/></svg>
<svg class="abs" style="left:747.4px;top:561.1px" width="8" height="12" viewBox="0 0 8 12"><path d="M4 11.4 C1.6 8.2 0.6 6.6 0.6 4.6 A3.4 3.4 0 0 1 7.4 4.6 C7.4 6.6 6.4 8.2 4 11.4 Z" fill="#f5a91d" stroke="#7d6d33" stroke-width="0.7"/><circle cx="4" cy="4.4" r="0.9" fill="#4a3d18"/></svg>
<svg class="abs" style="left:874.5px;top:573.5px" width="8" height="12" viewBox="0 0 8 12"><path d="M4 11.4 C1.6 8.2 0.6 6.6 0.6 4.6 A3.4 3.4 0 0 1 7.4 4.6 C7.4 6.6 6.4 8.2 4 11.4 Z" fill="#f5a91d" stroke="#7d6d33" stroke-width="0.7"/><circle cx="4" cy="4.4" r="0.9" fill="#4a3d18"/></svg>
<svg class="abs" style="left:881.9px;top:577.9px" width="8" height="12" viewBox="0 0 8 12"><path d="M4 11.4 C1.6 8.2 0.6 6.6 0.6 4.6 A3.4 3.4 0 0 1 7.4 4.6 C7.4 6.6 6.4 8.2 4 11.4 Z" fill="#f5a91d" stroke="#7d6d33" stroke-width="0.7"/><circle cx="4" cy="4.4" r="0.9" fill="#4a3d18"/></svg></div>
<svg class="abs" style="left:571px;top:622.5px" width="11" height="13" viewBox="0 0 11 13"><path d="M5.5 12.5 C2.5 8.5 1 6.5 1 4.8 A4.5 4.5 0 0 1 10 4.8 C10 6.5 8.5 8.5 5.5 12.5 Z" fill="#f0a81c" stroke="#6f6f3a" stroke-width="0.8"/><circle cx="5.5" cy="4.6" r="1.1" fill="#5a4a20"/></svg>
<div class="t" style="left:584.1px;top:624.6px;font-size:9.5px;font-weight:bold;color:#555">Server Location</div>
<svg class="abs" style="left:667.5px;top:623px" width="14" height="12" viewBox="0 0 14 12"><path d="M1.2 6 L4.8 10 L12.8 1.5" fill="none" stroke="#8dc04a" stroke-width="2"/></svg>
<div class="t" style="left:683.7px;top:624.6px;font-size:9.5px;font-weight:bold;color:#555">Resolved</div>
<svg class="abs" style="left:734px;top:623.5px" width="11" height="11" viewBox="0 0 11 11"><path d="M1 1 L10 10 M10 1 L1 10" stroke="#e0353b" stroke-width="2"/></svg>
<div class="t" style="left:748.4px;top:624.6px;font-size:9.5px;font-weight:bold;color:#555">Not Resolved</div>

</body></html>
